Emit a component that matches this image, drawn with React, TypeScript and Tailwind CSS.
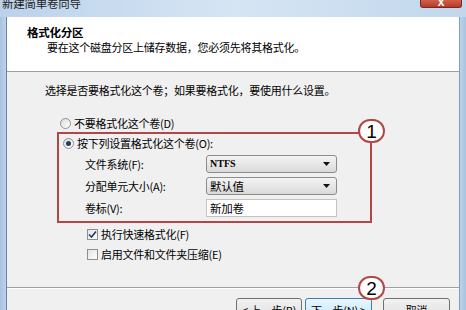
import React from 'react'

const Radio = ({ checked }: { checked?: boolean }) => (
  <span className="w-[11px] h-[11px] rounded-full border border-[#8e8f8f] bg-gradient-to-br from-[#dcdcdc] to-[#ffffff] flex items-center justify-center shrink-0">
    {checked && <span className="w-[5px] h-[5px] rounded-full bg-[#1f3d60]" />}
  </span>
)

const Check = ({ checked }: { checked?: boolean }) => (
  <span className="w-[11px] h-[11px] border border-[#8e8f8f] bg-gradient-to-br from-[#e2e2e2] to-[#ffffff] flex items-center justify-center shrink-0">
    {checked && (
      <svg width="9" height="9" viewBox="0 0 9 9">
        <path d="M1 4.5 L3.5 7 L8 1.5" stroke="#1d3e6b" strokeWidth="1.6" fill="none" />
      </svg>
    )}
  </span>
)

const Select = ({ children }: { children: React.ReactNode }) => (
  <div className="w-[131px] h-[18px] border border-[#8c8c8c] rounded-[3px] bg-gradient-to-b from-[#f4f4f4] to-[#dadada] flex items-center justify-between pl-[3px] pr-[6px]">
    {children}
    <svg width="7" height="4" viewBox="0 0 7 4">
      <path d="M0 0 L7 0 L3.5 4 Z" fill="#111" />
    </svg>
  </div>
)

const Callout = ({ n, cls }: { n: string; cls: string }) => (
  <div className={`absolute w-[27px] h-[24px] rounded-full border-2 border-[#b04848] bg-white flex items-center justify-center text-[19px] leading-none text-black font-['Liberation_Sans',sans-serif] ${cls}`}>
    {n}
  </div>
)

export default function App() {
  return (
    <div className="relative w-[466px] h-[310px] overflow-hidden flex flex-col bg-[#c3d7ed] text-black font-['Noto_Sans_CJK_SC',sans-serif] text-[11px] tracking-[-0.25px]">
      {/* title bar */}
      <div className="relative shrink-0 h-[17px] bg-gradient-to-r from-[#bcd2ea] via-[#d6e5f4] to-[#c2d7ec]">
        <span className="absolute left-[2px] top-[-4px] text-[11.5px] leading-[14px] text-[#1b1b1b]">新建简单卷向导</span>
        <div className="absolute left-[420px] top-0 w-[42px] h-[8px] rounded-b-[3px] border border-t-0 border-[#7b2a1f] bg-gradient-to-b from-[#d0604a] to-[#b83a26] flex items-end justify-center overflow-hidden">
          <span className="text-white text-[12px] leading-[10px] font-bold font-['Liberation_Sans',sans-serif]">x</span>
        </div>
      </div>

      <div className="flex shrink-0">
        <div className="w-[7px] border-r border-[#6e809b] bg-gradient-to-r from-[#a9c2de] to-[#bcd3ec]" />

        <div className="flex-1 flex flex-col bg-[#f0f0f0]">
          {/* header */}
          <div className="h-[55px] shrink-0 bg-white border-b border-[#a0a0a0] pt-[8px] leading-[15px]">
            <div className="pl-[20px] text-[11.5px] font-bold">格式化分区</div>
            <div className="pl-[40px]">要在这个磁盘分区上储存数据，您必须先将其格式化。</div>
          </div>

          {/* body */}
          <div className="h-[215px] shrink-0 flex flex-col leading-[14px]">
            <div className="pl-[38px] pt-[11px]">选择是否要格式化这个卷；如果要格式化，要使用什么设置。</div>

            <div className="flex items-center gap-[3px] pl-[53px] mt-[19px] h-[14px]">
              <Radio />
              <span>不要格式化这个卷(D)</span>
            </div>

            <div className="ml-[50px] mt-[2px] w-[315px] border-2 border-[#b04848] pt-[2px] pb-[4px]">
              <div className="flex items-center gap-[3px] pl-[4px] h-[14px]">
                <Radio checked />
                <span>按下列设置格式化这个卷(O):</span>
              </div>
              <div className="flex items-center mt-[5px]">
                <span className="w-[147px] pl-[26px]">文件系统(F):</span>
                <Select>
                  <span className="text-[10px] font-bold font-['Liberation_Serif',serif] tracking-normal">NTFS</span>
                </Select>
              </div>
              <div className="flex items-center mt-[4px]">
                <span className="w-[147px] pl-[26px]">分配单元大小(A):</span>
                <Select>
                  <span className="text-[11.5px]">默认值</span>
                </Select>
              </div>
              <div className="flex items-center mt-[4px]">
                <span className="w-[147px] pl-[26px]">卷标(V):</span>
                <div className="w-[131px] h-[18px] border border-[#c3c3c3] bg-white flex items-center pl-[3px] text-[11.5px]">新加卷</div>
              </div>
            </div>

            <div className="flex flex-col gap-[6px] pl-[80px] mt-[4px]">
              <div className="flex items-center gap-[3px] h-[14px]">
                <Check checked />
                <span>执行快速格式化(F)</span>
              </div>
              <div className="flex items-center gap-[3px] h-[14px]">
                <Check />
                <span>启用文件和文件夹压缩(E)</span>
              </div>
            </div>
          </div>

          {/* footer */}
          <div className="h-[40px] shrink-0 border-t border-[#a0a0a0]">
            <div className="h-full border-t border-white flex justify-end items-start pt-[9px] pr-[9px]">
              <button className="w-[66px] h-[23px] rounded-[3px] border border-[#707070] bg-gradient-to-b from-[#f2f2f2] to-[#dddddd] leading-[22px]">&lt; 上一步(B)</button>
              <button className="ml-[3px] w-[67px] h-[23px] rounded-[3px] border border-[#3c7fb1] bg-gradient-to-b from-[#eaf6fd] to-[#bee6fd] leading-[22px]">下一步(N) &gt;</button>
              <button className="ml-[11px] w-[67px] h-[23px] rounded-[3px] border border-[#707070] bg-gradient-to-b from-[#f2f2f2] to-[#dddddd] leading-[22px]">取消</button>
            </div>
          </div>
        </div>

        <div className="w-[7px] border-l border-[#8a9bb3] bg-gradient-to-r from-[#bcd3ec] to-[#a9c2de]" />
      </div>

      <Callout n="1" cls="left-[358px] top-[119px]" />
      <Callout n="2" cls="left-[358px] top-[276px]" />
    </div>
  )
}
